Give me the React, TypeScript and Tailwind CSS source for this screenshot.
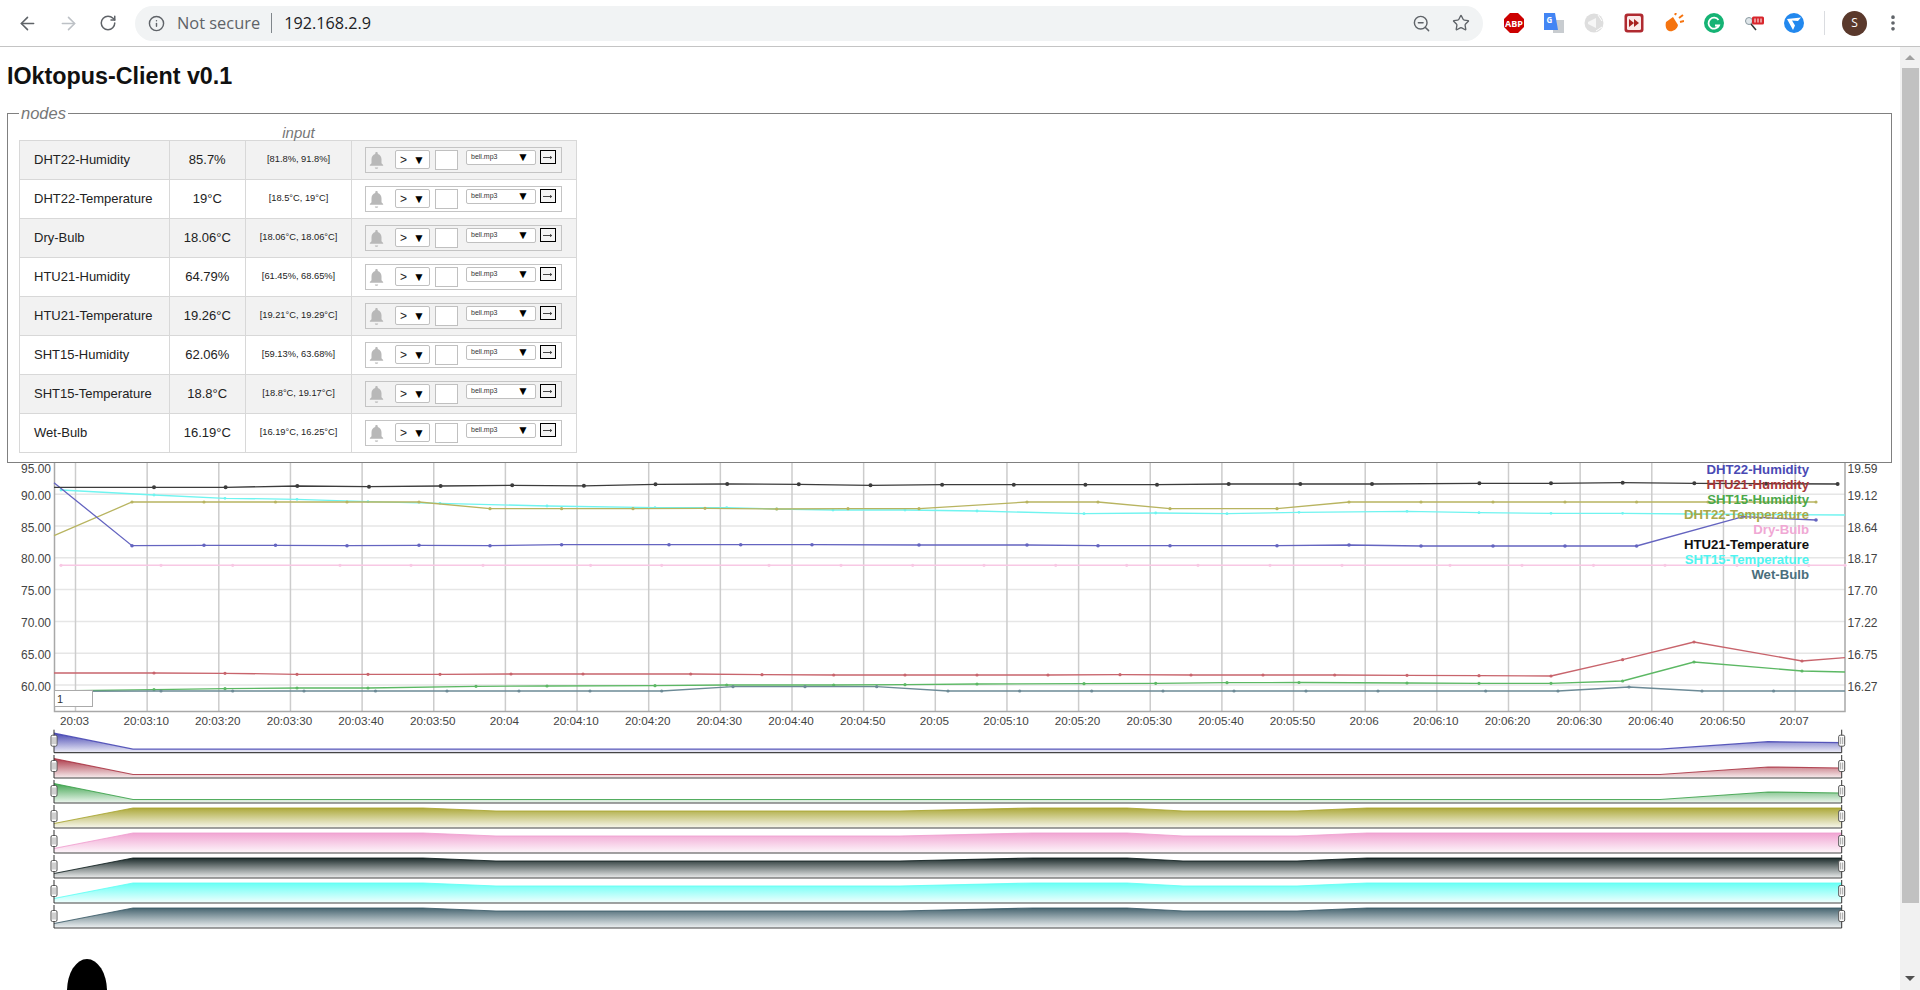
import { ArrowLeft, ArrowRight, Info, MoreVertical, RotateCw, Star, ZoomOut } from "lucide-react";

type Pt = [number, number];

const NODES = [
  { name: "DHT22-Humidity", value: "85.7%", range: "[81.8%, 91.8%]" },
  { name: "DHT22-Temperature", value: "19°C", range: "[18.5°C, 19°C]" },
  { name: "Dry-Bulb", value: "18.06°C", range: "[18.06°C, 18.06°C]" },
  { name: "HTU21-Humidity", value: "64.79%", range: "[61.45%, 68.65%]" },
  { name: "HTU21-Temperature", value: "19.26°C", range: "[19.21°C, 19.29°C]" },
  { name: "SHT15-Humidity", value: "62.06%", range: "[59.13%, 63.68%]" },
  { name: "SHT15-Temperature", value: "18.8°C", range: "[18.8°C, 19.17°C]" },
  { name: "Wet-Bulb", value: "16.19°C", range: "[16.19°C, 16.25°C]" },
];

const LEGEND = [
  { name: "DHT22-Humidity", color: "#4a4ab4" },
  { name: "HTU21-Humidity", color: "#a83838" },
  { name: "SHT15-Humidity", color: "#4aa84a" },
  { name: "DHT22-Temperature", color: "#a8a84a" },
  { name: "Dry-Bulb", color: "#f0a8d4" },
  { name: "HTU21-Temperature", color: "#111111" },
  { name: "SHT15-Temperature", color: "#50f4f0" },
  { name: "Wet-Bulb", color: "#4a6e7c" },
];

const TIMES = [
  "20:03", "20:03:10", "20:03:20", "20:03:30", "20:03:40", "20:03:50",
  "20:04", "20:04:10", "20:04:20", "20:04:30", "20:04:40", "20:04:50",
  "20:05", "20:05:10", "20:05:20", "20:05:30", "20:05:40", "20:05:50",
  "20:06", "20:06:10", "20:06:20", "20:06:30", "20:06:40", "20:06:50",
  "20:07",
];

const LEFT_AXIS = ["95.00", "90.00", "85.00", "80.00", "75.00", "70.00", "65.00", "60.00"];
const RIGHT_AXIS = ["19.59", "19.12", "18.64", "18.17", "17.70", "17.22", "16.75", "16.27"];
const AXIS_Y = [468, 495, 527, 558.5, 590.5, 622.5, 654, 686];
const H_GRID = [494.3, 526, 557.8, 589.6, 621.4, 653.2, 685];

// sampled by eye from the reference, page coordinates
const SERIES: { color: string; w: number; r: number; first: number; last: number; pts: Pt[] }[] = [
  {
    color: "#f8c8e4", w: 1.6, r: 1.6, first: 0, last: 0,
    pts: [[61, 565.3], [161, 565.3], [232.7, 565.3], [340, 565.3], [411, 565.3], [483, 565.3], [590.6, 565.3], [661.7, 565.3], [769, 565.3], [841, 565.3], [912.7, 565.3], [984, 565.3], [1055.7, 565.3], [1126.7, 565.3], [1198, 565.3], [1270, 565.3], [1342, 565.3], [1450, 565.3], [1522, 565.3], [1593.5, 565.3], [1665, 565.3], [1737, 565.3], [1808.7, 565.3], [1845, 565.3]],
  },
  {
    color: "#70f4f0", w: 1.3, r: 1.4, first: 0, last: 1,
    pts: [[61, 490], [154, 495], [225, 498.3], [297, 499.3], [368, 501.7], [440, 503.3], [547, 506], [655, 507.7], [726.7, 507.7], [776.7, 509], [833, 510], [905, 510], [977, 511], [1084, 513.7], [1155.7, 513], [1227, 513.7], [1299, 512.3], [1407, 511.3], [1479, 512.7], [1551, 513.3], [1622.6, 513.3], [1694, 514], [1766, 514.5], [1845, 515]],
  },
  {
    color: "#b8b460", w: 1.3, r: 1.6, first: 1, last: 0,
    pts: [[54, 535.7], [132, 502], [204, 502], [275.5, 502], [347, 502], [419, 502], [490, 508.7], [561.6, 508.7], [633, 508.7], [705, 508.3], [776.7, 509], [848, 508.7], [919, 508.7], [1027, 502], [1098, 502], [1170, 508.7], [1277, 508.7], [1349, 502], [1421, 502], [1493, 502], [1565, 502], [1636.6, 502], [1708, 502], [1780, 502], [1816, 502]],
  },
  {
    color: "#6464c0", w: 1.3, r: 1.8, first: 1, last: 0,
    pts: [[54, 482.7], [132, 545.7], [204, 545.3], [275.5, 545.3], [347, 545.7], [419, 545.3], [490, 545.7], [561.6, 544.7], [669, 544.7], [740.7, 544.7], [812, 544.7], [919, 545], [1027, 545], [1098, 545.7], [1170, 545.7], [1277, 545.7], [1349, 545], [1421, 546], [1493, 546], [1565, 546], [1636.6, 546], [1743, 516.7], [1816, 520]],
  },
  {
    color: "#c8646c", w: 1.3, r: 1.6, first: 1, last: 1,
    pts: [[54, 673], [154, 673], [225, 673.3], [297, 674.3], [368, 674.3], [440, 674.3], [511, 674], [583, 674], [690.7, 674], [762, 674.7], [833.7, 675], [905, 675], [977, 675], [1048, 675], [1120, 674.7], [1191, 675], [1263, 675], [1334.7, 675], [1407, 675.3], [1479, 675.7], [1551, 676], [1622.6, 659.7], [1694, 642], [1802, 661], [1845, 657.7]],
  },
  {
    color: "#5cb864", w: 1.3, r: 1.6, first: 1, last: 1,
    pts: [[54, 691], [154, 689.7], [225, 688.7], [297, 688], [368, 688], [476, 686.3], [547, 686], [655, 685.7], [726.7, 685], [833.7, 685], [905, 684.7], [977, 684], [1084, 683.7], [1155.7, 683.3], [1227, 682.7], [1299, 682.5], [1407, 683], [1479, 683.3], [1551, 683.3], [1622.6, 681], [1694, 662], [1802, 671], [1845, 672]],
  },
  {
    color: "#6c8a96", w: 1.3, r: 1.6, first: 1, last: 1,
    pts: [[54, 691.3], [161, 691], [232.7, 691], [304, 691], [375.5, 691], [447, 691], [519, 691], [590, 691], [661.7, 691], [733, 686.7], [805, 686.7], [876.7, 686.7], [948, 691], [1019.7, 691], [1091.7, 691], [1163, 691], [1234, 691], [1306, 691], [1378, 691], [1485.7, 691], [1558, 691], [1629, 687], [1702, 691], [1773.6, 691], [1845, 691]],
  },
  {
    color: "#3c3c3c", w: 1.3, r: 2, first: 1, last: 0,
    pts: [[54, 487.3], [154, 487.3], [225.6, 487.3], [297.3, 486], [369, 486.7], [440.6, 486], [512.2, 485.3], [583.9, 485.8], [655.5, 484.3], [727.2, 484], [798.8, 484.3], [870.5, 485.3], [942.1, 484.7], [1013.8, 484.7], [1085.4, 484.7], [1157, 484.7], [1228.7, 484], [1300.3, 484], [1372, 484], [1479.4, 483.3], [1551, 483.3], [1622.7, 482.7], [1694.3, 483.3], [1766, 483.7], [1837.6, 484]],
  },
];

const toPoints = (pts: Pt[]) => pts.map((p) => p.join(",")).join(" ");

const riseThenFlat: Pt[] = [[54, -19.5], [133, -3.5], [1660, -3.5], [1768, -11], [1841.7, -10]];
const lowThenHigh: Pt[] = [[54, -4.5], [133, -20], [423, -20], [496, -17], [900, -17], [1033, -20], [1127, -20], [1183, -17], [1297, -17], [1367, -20], [1841.7, -20]];

const STRIPS = [
  { id: "s0", color: "#4040b0", shape: riseThenFlat, base: 752.7 },
  { id: "s1", color: "#a83040", shape: riseThenFlat, base: 778 },
  { id: "s2", color: "#38a048", shape: riseThenFlat, base: 803 },
  { id: "s3", color: "#a8a430", shape: lowThenHigh, base: 828 },
  { id: "s4", color: "#f0a0d0", shape: lowThenHigh, base: 853 },
  { id: "s5", color: "#102020", shape: lowThenHigh, base: 878 },
  { id: "s6", color: "#60fff4", shape: lowThenHigh, base: 903 },
  { id: "s7", color: "#3c5c68", shape: lowThenHigh, base: 928 },
];

const Bell = () => (
  <svg viewBox="3 1.500 18 21" className="w-[15px] h-[20px] ml-[1px] fill-[#b8b8b8]">
    <path d="M12 22.500c1.100 0 2-.5 2-1.500h-4c0 1 .9 1.500 2 1.500zm6-6.500v-5c0-3.070-1.640-5.640-4.500-6.320V4c0-.830-.670-1.500-1.500-1.500s-1.500.670-1.500 1.500v.680C7.630 5.360 6 7.920 6 11v5l-2 2v1h16v-1l-2-2z" />
  </svg>
);

const AlarmWidget = () => (
  <div className="ml-[13px] w-[197px] h-[26px] border border-[#c4c4c4] flex items-start pt-[2px]">
    <div className="ml-[2px] w-[18px]">
      <Bell />
    </div>
    <div className="ml-[9px] w-[35px] h-[19px] bg-white border border-[#c0c0c0] rounded-[2px] flex items-center text-[12px] text-[#222]">
      <span className="ml-[4px]">&gt;</span>
      <span className="ml-[6px] text-[12px] leading-none text-black">▼</span>
    </div>
    <input className="ml-[5px] w-[23px] h-[20px] bg-white border border-[#c0c0c0]" aria-label="threshold" />
    <div className="ml-[8px] w-[70px] h-[14.500px] bg-white border border-[#c0c0c0] rounded-[2px] flex items-center justify-between text-[7px] text-[#333]">
      <span className="ml-[4px]">bell.mp3</span>
      <span className="mr-[6px] text-[12px] leading-none text-black">▼</span>
    </div>
    <button className="ml-[4px] w-[16px] h-[14px] bg-[#f4f4f4] border border-black flex items-center justify-center">
      <svg viewBox="0 0 12 6" className="w-[10px] h-[5px] stroke-[#222] fill-none">
        <path d="M0 3h10M8.500 1.500 10.500 3 8.500 4.500" />
      </svg>
    </button>
  </div>
);

const ExtensionIcons = () => (
  <div className="flex items-center gap-[20px] ml-[21px]">
    {/* ABP */}
    <svg viewBox="0 0 20 20" className="w-[20px] h-[20px]">
      <path d="M6 0h8l6 6v8l-6 6H6l-6-6V6z" fill="#cc0000" />
      <text x="10" y="13.500" textAnchor="middle" fontSize="9" fontWeight="700" fill="#fff">ABP</text>
    </svg>
    {/* translate */}
    <svg viewBox="0 0 20 20" className="w-[20px] h-[20px]">
      <rect x="9" y="7" width="11" height="13" fill="#c8ccd0" />
      <path d="M0 0h11l3 17H0z" fill="#4285f4" />
      <text x="5.500" y="10" textAnchor="middle" fontSize="8" fontWeight="700" fill="#fff">G</text>
    </svg>
    {/* announce, greyed out */}
    <svg viewBox="0 0 20 20" className="w-[20px] h-[20px]">
      <circle cx="10" cy="10" r="9.500" fill="#dedede" />
      <path d="M4 9l8-4v10l-8-4z" fill="#f6f6f6" />
      <path d="M14 2l4 6M12 18l6-4" stroke="#fff" fill="none" />
    </svg>
    {/* fast forward */}
    <svg viewBox="0 0 20 20" className="w-[20px] h-[20px]">
      <rect x="0.500" y="0.500" width="19" height="19" rx="3" fill="#b02a30" />
      <rect x="3" y="3" width="14" height="14" rx="1.500" fill="#fbeaea" />
      <path d="M5 6l5 4-5 4zM10 6l5 4-5 4z" fill="#a8201f" />
    </svg>
    {/* acorn */}
    <svg viewBox="0 0 20 20" className="w-[20px] h-[20px]">
      <path d="M2 9l7-5 5 8c-1 5-6 7-9 6S1 13 2 9z" fill="#f57410" />
      <path d="M11 2l1-2M15 5l4-3M16 9l4-1" stroke="#f57410" strokeWidth="2" fill="none" />
    </svg>
    {/* grammarly */}
    <svg viewBox="0 0 20 20" className="w-[20px] h-[20px]">
      <circle cx="10" cy="10" r="10" fill="#15b374" />
      <path d="M14.500 7A5.500 5.500 0 1 0 15 12.500H11" stroke="#fff" strokeWidth="1.800" fill="none" />
    </svg>
    {/* video search */}
    <svg viewBox="0 0 20 20" className="w-[20px] h-[20px]">
      <circle cx="5" cy="8" r="3.500" fill="#dfe6ea" stroke="#8a9aa0" />
      <path d="M7 11l5 6" stroke="#333" strokeWidth="1.500" />
      <rect x="8" y="3.500" width="12" height="8" rx="1.500" fill="#d8262c" />
      <path d="M11 5.500v4M14 5.500v4M17 5.500v4" stroke="#fff" strokeWidth="1" />
    </svg>
    {/* blue V */}
    <svg viewBox="0 0 20 20" className="w-[20px] h-[20px]">
      <circle cx="10" cy="10" r="10" fill="#2288ee" />
      <path d="M3 6l14-1.500-3 3.500-6-.5 3 5-2 4.500z" fill="#fff" />
    </svg>
  </div>
);

const BrowserBar = () => (
  <div className="h-[47px] shrink-0 border-b border-[#c4c4c4] flex items-center bg-white text-[#5f6368] font-['Open_Sans',sans-serif]">
    <ArrowLeft className="ml-[17px] w-[21px] h-[21px]" strokeWidth={1.8} />
    <ArrowRight className="ml-[20px] w-[21px] h-[21px] text-[#bdc1c6]" strokeWidth={1.8} />
    <RotateCw className="ml-[20px] w-[18px] h-[18px]" strokeWidth={2} />
    <div className="ml-[18px] w-[1348px] h-[35px] rounded-full bg-[#f1f3f4] flex items-center">
      <Info className="ml-[13px] w-[17px] h-[17px]" strokeWidth={2} />
      <span className="ml-[12px] text-[16.400px] leading-none">Not secure</span>
      <span className="ml-[11px] h-[20px] w-px bg-[#80868b]" />
      <span className="ml-[12px] text-[16.200px] leading-none text-[#202124]">192.168.2.9</span>
      <ZoomOut className="ml-auto w-[19px] h-[19px]" strokeWidth={1.8} />
      <Star className="ml-[21px] mr-[13px] w-[18px] h-[18px]" strokeWidth={1.8} />
    </div>
    <ExtensionIcons />
    <span className="ml-[20px] h-[24px] w-px bg-[#dadce0]" />
    <div className="ml-[17px] w-[25px] h-[25px] rounded-full bg-[#5a392c] text-white text-[12px] flex items-center justify-center">S</div>
    <MoreVertical className="ml-[16px] w-[20px] h-[20px]" strokeWidth={2.4} />
  </div>
);

const NodesPanel = () => (
  <fieldset className="mx-[7px] mt-[16px] h-[359px] w-[1885px] border border-[#808080] pl-[11px]">
    <legend className="px-[2px] italic text-[16.500px] leading-[19px] text-[#777]">nodes</legend>
    <table className="table-fixed w-[557px] mt-[2px] border-collapse text-[13px] text-[#222]">
      <colgroup>
        <col className="w-[149.500px]" />
        <col className="w-[76.500px]" />
        <col className="w-[106px]" />
        <col className="w-[225px]" />
      </colgroup>
      <thead>
        <tr className="h-[15px]">
          <th />
          <th />
          <th className="italic font-normal text-[15px] leading-[15px] text-[#777]">input</th>
          <th />
        </tr>
      </thead>
      <tbody>
        {NODES.map((node, i) => (
          <tr key={node.name} className={`h-[39px] ${i % 2 === 0 ? "bg-[#f2f2f2]" : "bg-white"}`}>
            <td className="border border-[#d8d8d8] pl-[14px]">{node.name}</td>
            <td className="border border-[#d8d8d8] text-center">{node.value}</td>
            <td className="border border-[#d8d8d8] text-center text-[9.300px]">{node.range}</td>
            <td className="border border-[#d8d8d8]">
              <AlarmWidget />
            </td>
          </tr>
        ))}
      </tbody>
    </table>
  </fieldset>
);

const Chart = () => (
  <svg viewBox="0 462 1900 267" className="block w-[1900px] h-[267px] -mt-[1px]">
    {H_GRID.map((y) => (
      <line key={y} x1="54" x2="1845" y1={y} y2={y} stroke="#e6e6e6" strokeWidth="1.500" />
    ))}
    {TIMES.map((t, i) => {
      const x = 75.5 + 71.65 * i;
      return (
        <g key={t}>
          <line x1={x} x2={x} y1="463" y2="711" stroke="#cccccc" strokeWidth="1.500" />
          <text x={x - 1} y="725" textAnchor="middle" fontSize="11.700" fill="#444">{t}</text>
        </g>
      );
    })}
    <path d="M54.500 463V711.500H1845V463" fill="none" stroke="#a8a8a8" strokeWidth="1.500" />
    {SERIES.map((s) => (
      <g key={s.color}>
        <polyline points={toPoints(s.pts)} fill="none" stroke={s.color} strokeWidth={s.w} />
        {s.pts.slice(s.first, s.pts.length - s.last).map((p) => (
          <circle key={p[0]} cx={p[0]} cy={p[1]} r={s.r} fill={s.color} />
        ))}
      </g>
    ))}
    {LEFT_AXIS.map((t, i) => (
      <text key={t} x="51" y={AXIS_Y[i] + 4.500} textAnchor="end" fontSize="12" fill="#444">{t}</text>
    ))}
    {RIGHT_AXIS.map((t, i) => (
      <text key={t} x="1847.500" y={AXIS_Y[i] + 4.500} fontSize="12" fill="#444">{t}</text>
    ))}
    {LEGEND.map((l, i) => (
      <text key={l.name} x="1809" y={474 + 15 * i} textAnchor="end" fontSize="13.200" fontWeight="700" fill={l.color}>
        {l.name}
      </text>
    ))}
    <rect x="54.500" y="690.500" width="38" height="16" fill="#fff" stroke="#aaaaaa" />
    <text x="57" y="703" fontSize="11" fill="#333">1</text>
  </svg>
);

const Handle = ({ x, y }: { x: number; y: number }) => (
  <g>
    <rect x={x - 3} y={y - 5.500} width="6" height="11" rx="1.500" fill="#fff" stroke="#555" />
    <path d={`M${x - 1} ${y - 3.500}v7M${x + 1} ${y - 3.500}v7`} stroke="#888" strokeWidth="0.800" />
  </g>
);

const RangeStrips = () => (
  <svg viewBox="0 729 1900 205" className="block w-[1900px] h-[205px]">
    <defs>
      {STRIPS.map((s) => (
        <linearGradient key={s.id} id={s.id} x1="0" y1="0" x2="0" y2="1">
          <stop offset="0" stopColor={s.color} stopOpacity="0.95" />
          <stop offset="1" stopColor={s.color} stopOpacity="0.08" />
        </linearGradient>
      ))}
    </defs>
    {STRIPS.map((s) => {
      const top = s.shape.map(([x, dy]): Pt => [x, s.base + dy]);
      const area: Pt[] = [[54, s.base], ...top, [1841.7, s.base]];
      return (
        <g key={s.id}>
          <polygon points={toPoints(area)} fill={`url(#${s.id})`} />
          <polyline points={toPoints(top)} fill="none" stroke={s.color} strokeOpacity="0.85" strokeWidth="1.200" />
          <line x1="54" x2="1841.700" y1={s.base} y2={s.base} stroke="#444" strokeWidth="1.200" />
          <line x1="54" x2="54" y1={s.base - 23} y2={s.base} stroke="#333" />
          <line x1="1841.700" x2="1841.700" y1={s.base - 23} y2={s.base} stroke="#333" />
          <Handle x={54} y={s.base - 12} />
          <Handle x={1841.7} y={s.base - 12} />
        </g>
      );
    })}
  </svg>
);

const Scrollbar = () => (
  <div className="w-[20px] shrink-0 bg-[#f1f1f1] flex flex-col items-center">
    <div className="h-[21px] flex items-center justify-center">
      <span className="w-0 h-0 border-x-[5px] border-x-transparent border-b-[5px] border-b-[#a0a0a0]" />
    </div>
    <div className="w-[17px] h-[835px] bg-[#c1c1c1]" />
    <div className="mt-auto h-[24px] flex items-center justify-center">
      <span className="w-0 h-0 border-x-[5px] border-x-transparent border-t-[5px] border-t-[#505050]" />
    </div>
  </div>
);

export default function App() {
  return (
    <div className="h-[990px] w-[1920px] overflow-hidden flex flex-col bg-white font-['Liberation_Sans',sans-serif]">
      <BrowserBar />
      <div className="flex-1 flex min-h-0">
        <div className="w-[1900px] shrink-0 overflow-hidden">
          <h1 className="ml-[7px] mt-[17px] text-[23.300px] leading-[24px] font-bold text-[#111]">IOktopus-Client v0.1</h1>
          <NodesPanel />
          <Chart />
          <RangeStrips />
          <div className="ml-[67px] mt-[25px] w-[40px] h-[64px] rounded-[50%] bg-black" />
        </div>
        <Scrollbar />
      </div>
    </div>
  );
}
